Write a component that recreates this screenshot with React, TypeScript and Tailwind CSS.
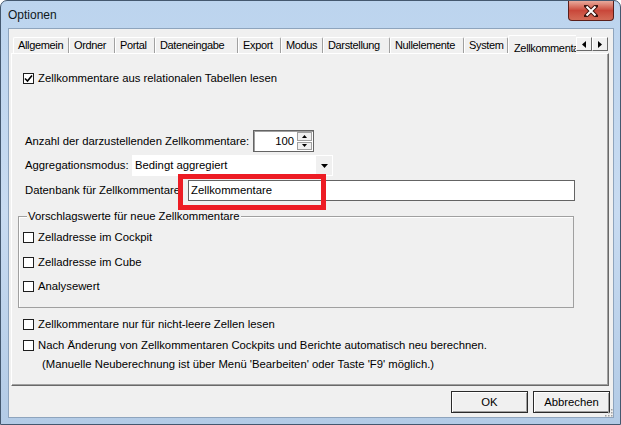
import React from "react";

const tabs = [
  { label: "Allgemein", w: 56 },
  { label: "Ordner", w: 46 },
  { label: "Portal", w: 40 },
  { label: "Dateneingabe", w: 83 },
  { label: "Export", w: 43 },
  { label: "Modus", w: 42 },
  { label: "Darstellung", w: 67 },
  { label: "Nullelemente", w: 74 },
  { label: "System", w: 44 },
];

function Check({ checked = false }: { checked?: boolean }) {
  return (
    <span className="w-[11px] h-[11px] border border-[#1e1e1e] bg-white flex items-center justify-center shrink-0">
      {checked && (
        <svg width="9" height="9" viewBox="0 0 9 9">
          <path d="M1 4.5 L3.5 7 L8 1.5" fill="none" stroke="#000" strokeWidth="1.6" />
        </svg>
      )}
    </span>
  );
}

function CheckRow({ label, checked, className = "" }: { label: string; checked?: boolean; className?: string }) {
  return (
    <div className={"flex items-center h-[11px] gap-[4px] " + className}>
      <Check checked={checked} />
      <span className="leading-none whitespace-nowrap">{label}</span>
    </div>
  );
}

function ArrowBtn({ dir }: { dir: "l" | "r" }) {
  return (
    <div className="w-[16px] h-[14px] bg-[#f0f0f0] border-t border-l border-white border-r border-b border-r-[#696969] border-b-[#696969] flex items-center justify-center">
      <svg width="4" height="7" viewBox="0 0 4 7">
        {dir === "l" ? <path d="M4 0 L0 3.5 L4 7 Z" fill="#000" /> : <path d="M0 0 L4 3.5 L0 7 Z" fill="#000" />}
      </svg>
    </div>
  );
}

export default function App() {
  return (
    <div className="relative w-[621px] h-[425px] overflow-hidden rounded-t-[7px] border border-[#44586f] bg-gradient-to-b from-[#bcd4ee] via-[#c8dbf1] to-[#b3cbe6] flex flex-col font-['Liberation_Sans',Arial,sans-serif] text-[11.3px] text-black">
      {/* Titelleiste */}
      <div className="h-[27px] flex items-center pl-[7px] shrink-0">
        <span className="text-[12px] text-[#101820] mt-[1px]">Optionen</span>
      </div>
      <div className="absolute top-0 right-[6px] w-[46px] h-[20px] rounded-b-[4px] border border-t-0 border-[#5a1e1a] bg-gradient-to-b from-[#e7a99c] via-[#c9473a] to-[#d36b57] flex items-center justify-center">
        <svg width="14" height="12" viewBox="0 0 14 12">
          <path d="M2 1 L12 11 M12 1 L2 11" stroke="#3b1510" strokeWidth="4" strokeLinecap="square" />
          <path d="M2.5 1.5 L11.5 10.5 M11.5 1.5 L2.5 10.5" stroke="#fff" strokeWidth="2" />
        </svg>
      </div>

      {/* Client */}
      <div className="relative ml-[7px] w-[606px] h-[390px] bg-[#f0f0f0] border border-[#8ea4bd] flex flex-col">
        <div className="ml-[2px] mt-[6px] w-[598px] flex flex-col">
          {/* Reiter */}
          <div className="relative z-10 flex h-[19px] text-[11px] tracking-[-0.35px]">
            <div className="flex w-[565px] overflow-hidden pl-[2px]">
              {tabs.map((t) => (
                <div
                  key={t.label}
                  style={{ width: t.w }}
                  className="shrink-0 mt-[2px] h-[16px] border-t border-l border-white border-r border-r-[#a0a0a0] rounded-t-[2px] flex items-center pl-[4px] whitespace-nowrap"
                >
                  {t.label}
                </div>
              ))}
              <div className="shrink-0 w-[80px] h-[19px] bg-[#f0f0f0] border-t border-l border-white rounded-t-[2px] flex items-start pt-[4px] pl-[5px] whitespace-nowrap">
                Zellkommentare
              </div>
            </div>
            <div className="flex mt-[2px]">
              <ArrowBtn dir="l" />
              <ArrowBtn dir="r" />
            </div>
          </div>

          {/* Panel */}
          <div className="-mt-px h-[333px] border-t border-l border-white border-r border-b border-r-[#696969] border-b-[#696969] shadow-[inset_-1px_-1px_0_#a0a0a0] flex flex-col pl-[11px]">
            <CheckRow className="mt-[19px]" checked label="Zellkommentare aus relationalen Tabellen lesen" />

            <div className="mt-[46px] flex items-center h-[22px]">
              <span className="ml-[2px] w-[228px] whitespace-nowrap">Anzahl der darzustellenden Zellkommentare:</span>
              <div className="w-[61px] h-[22px] border border-[#646464] shadow-[inset_1px_1px_0_#a0a0a0] bg-white flex items-center">
                <span className="flex-1 text-right pr-[3px]">100</span>
                <div className="w-[15px] h-[18px] mr-[1px] flex flex-col gap-[1px]">
                  <div className="flex-1 bg-[#f0f0f0] border border-[#a0a0a0] flex items-center justify-center">
                    <svg width="5" height="3" viewBox="0 0 5 3"><path d="M0 3 L2.5 0 L5 3 Z" fill="#000" /></svg>
                  </div>
                  <div className="flex-1 bg-[#f0f0f0] border border-[#a0a0a0] flex items-center justify-center">
                    <svg width="5" height="3" viewBox="0 0 5 3"><path d="M0 0 L2.5 3 L5 0 Z" fill="#000" /></svg>
                  </div>
                </div>
              </div>
            </div>

            <div className="mt-[3px] flex items-center h-[21px]">
              <span className="ml-[2px] w-[107px] whitespace-nowrap">Aggregationsmodus:</span>
              <div className="w-[201px] h-[21px] bg-white flex items-center">
                <span className="flex-1 pl-[3px]">Bedingt aggregiert</span>
                <div className="w-[16px] h-[19px] mr-[1px] bg-[#f0f0f0] flex items-center justify-center">
                  <svg width="7" height="4" viewBox="0 0 7 4"><path d="M0 0 L3.5 4 L7 0 Z" fill="#000" /></svg>
                </div>
              </div>
            </div>

            <div className="mt-[4px] flex items-center h-[21px]">
              <span className="ml-[2px] w-[163px] whitespace-nowrap">Datenbank für Zellkommentare:</span>
              <div className="w-[387px] h-[21px] border border-[#646464] bg-white flex items-center pl-[2px]">
                Zellkommentare
              </div>
            </div>

            <div className="relative mt-[15px] ml-[-5px] w-[556px] h-[92px] border border-[#a0a0a0] shadow-[inset_1px_1px_0_#fff] flex flex-col pt-[15px]">
              <span className="absolute left-[8px] top-[-8px] bg-[#f0f0f0] px-[1px] leading-[14px] whitespace-nowrap">
                Vorschlagswerte für neue Zellkommentare
              </span>
              <CheckRow className="ml-[4px]" label="Zelladresse im Cockpit" />
              <CheckRow className="mt-[14px] ml-[4px]" label="Zelladresse im Cube" />
              <CheckRow className="mt-[13px] ml-[4px]" label="Analysewert" />
            </div>

            <CheckRow className="mt-[11px]" label="Zellkommentare nur für nicht-leere Zellen lesen" />
            <CheckRow className="mt-[10px]" label="Nach Änderung von Zellkommentaren Cockpits und Berichte automatisch neu berechnen." />
            <div className="mt-[7px] ml-[19px] h-[13px] leading-[13px] whitespace-nowrap">
              (Manuelle Neuberechnung ist über Menü 'Bearbeiten' oder Taste 'F9' möglich.)
            </div>
          </div>
        </div>

        {/* Buttons */}
        <div className="mt-[5px] flex justify-end gap-[5px] pr-[3px]">
          <button className="w-[77px] h-[22px] border border-[#2a2a2a] bg-[#f0f0f0] shadow-[inset_1px_1px_0_#fff,inset_-1px_-1px_0_#a0a0a0]">
            OK
          </button>
          <button className="w-[77px] h-[22px] border border-[#2a2a2a] bg-[#f0f0f0] shadow-[inset_1px_1px_0_#fff,inset_-1px_-1px_0_#a0a0a0]">
            Abbrechen
          </button>
        </div>

        {/* Größengriff */}
        <svg className="absolute right-0 bottom-0" width="10" height="10" viewBox="0 0 10 10">
          {[[8, 2], [8, 5], [5, 5], [8, 8], [5, 8], [2, 8]].map(([x, y]) => (
            <rect key={`${x}-${y}`} x={x} y={y} width="1.5" height="1.5" fill="#a0a0a0" />
          ))}
        </svg>
      </div>

      {/* rote Markierung */}
      <div className="absolute left-[177px] top-[173px] w-[148px] h-[36px] border-[5px] border-[#ed1c24]" />
    </div>
  );
}
